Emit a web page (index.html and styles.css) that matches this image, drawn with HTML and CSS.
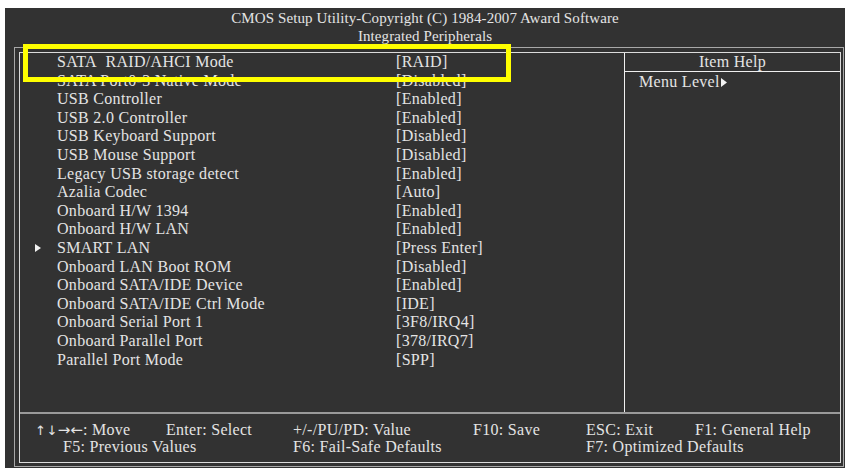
FILE: index.html
```html
<!DOCTYPE html>
<html>

<head>
    <link rel="stylesheet" href="styles.css">
</head>

<body>
    <div id="screen">
        <div id="title">
            <div>CMOS Setup Utility-Copyright (C) 1984-2007 Award Software</div>
            <div>Integrated Peripherals</div>
        </div>
        <div id="frame">
            <div id="inner">
                <div id="main">
                    <div id="items">
                        <div class="row"><span class="mark"></span><span class="label">SATA&nbsp; RAID/AHCI Mode</span><span class="value">[RAID]</span></div>
                        <div class="row"><span class="mark"></span><span class="label">SATA Port0-3 Native Mode</span><span class="value">[Disabled]</span></div>
                        <div class="row"><span class="mark"></span><span class="label">USB Controller</span><span class="value">[Enabled]</span></div>
                        <div class="row"><span class="mark"></span><span class="label">USB 2.0 Controller</span><span class="value">[Enabled]</span></div>
                        <div class="row"><span class="mark"></span><span class="label">USB Keyboard Support</span><span class="value">[Disabled]</span></div>
                        <div class="row"><span class="mark"></span><span class="label">USB Mouse Support</span><span class="value">[Disabled]</span></div>
                        <div class="row"><span class="mark"></span><span class="label">Legacy USB storage detect</span><span class="value">[Enabled]</span></div>
                        <div class="row"><span class="mark"></span><span class="label">Azalia Codec</span><span class="value">[Auto]</span></div>
                        <div class="row"><span class="mark"></span><span class="label">Onboard H/W 1394</span><span class="value">[Enabled]</span></div>
                        <div class="row"><span class="mark"></span><span class="label">Onboard H/W LAN</span><span class="value">[Enabled]</span></div>
                        <div class="row">
                            <span class="mark"><svg width="6" height="8" viewBox="0 0 6 8"><polygon points="0,0 6,4 0,8" fill="#f2f2f2" /></svg></span><span class="label">SMART LAN</span><span class="value">[Press Enter]</span>
                        </div>
                        <div class="row"><span class="mark"></span><span class="label">Onboard LAN Boot ROM</span><span class="value">[Disabled]</span></div>
                        <div class="row"><span class="mark"></span><span class="label">Onboard SATA/IDE Device</span><span class="value">[Enabled]</span></div>
                        <div class="row"><span class="mark"></span><span class="label">Onboard SATA/IDE Ctrl Mode</span><span class="value">[IDE]</span></div>
                        <div class="row"><span class="mark"></span><span class="label">Onboard Serial Port 1</span><span class="value">[3F8/IRQ4]</span></div>
                        <div class="row"><span class="mark"></span><span class="label">Onboard Parallel Port</span><span class="value">[378/IRQ7]</span></div>
                        <div class="row"><span class="mark"></span><span class="label">Parallel Port Mode</span><span class="value">[SPP]</span></div>
                    </div>
                    <div id="help">
                        <div id="helpHead">Item Help</div>
                        <div id="helpText">Menu Level<svg width="6" height="9" viewBox="0 0 6 9"><polygon points="0,0 6,4.5 0,9" fill="#f2f2f2" /></svg></div>
                    </div>
                </div>
                <div id="keys">
                    <span><span class="arrows">↑↓</span><span class="arrows wide">→←</span>: Move</span>
                    <span>Enter: Select</span>
                    <span>+/-/PU/PD: Value</span>
                    <span>F10: Save</span>
                    <span>ESC: Exit</span>
                    <span>F1: General Help</span>
                    <span class="f5">F5: Previous Values</span>
                    <span class="f6">F6: Fail-Safe Defaults</span>
                    <span class="f7">F7: Optimized Defaults</span>
                </div>
            </div>
        </div>
        <!-- highlight drawn over the first item -->
        <div id="highlight"></div>
    </div>
</body>

</html>
```

FILE: styles.css
```css
body {
    margin: 0;
    padding: 0;
    background-color: #fff;
    font-family: "Liberation Serif", "DejaVu Serif", serif;
    font-size: 16px;
    color: #e4e4e4;
    letter-spacing: 0.3px;
}

#screen {
    position: relative;
    margin: 8px 0 0 5px;
    width: 840px;
    height: 460px;
    background-color: #323232;
}

#title {
    height: 39px;
    text-align: center;
    font-size: 15px;
    letter-spacing: 0.1px;
    line-height: 18px;
    padding-top: 1px;
    box-sizing: border-box;
}

#frame {
    margin-left: 9px;
    width: 830px;
    height: 420px;
    border: 1px solid #a8a8a8;
    padding: 4px 2px 3px 4px;
    box-sizing: border-box;
}

#inner {
    height: 100%;
    border: 1px solid #dcdcdc;
    box-sizing: border-box;
    display: flex;
    flex-direction: column;
}

#main {
    flex: 1;
    display: flex;
    border-bottom: 2px solid #9a9a9a;
}

#items {
    width: 604px;
}

.row {
    display: flex;
    align-items: center;
    height: 18.6px;
    line-height: 18.6px;
    white-space: nowrap;
}

.mark {
    width: 37px;
    padding-left: 15px;
    box-sizing: border-box;
    display: flex;
    align-items: center;
}

.label {
    width: 339px;
}

#help {
    flex: 1;
    border-left: 1px solid #f0f0f0;
}

#helpHead {
    height: 18px;
    line-height: 18px;
    text-align: center;
    border-bottom: 1px solid #f0f0f0;
}

#helpText {
    padding-left: 14px;
    line-height: 19px;
}

#helpText svg {
    margin-left: 1px;
}

#keys {
    height: 48px;
    padding: 7px 0 0 15px;
    box-sizing: border-box;
    display: grid;
    grid-template-columns: 131px 127px 180px 113px 109px auto;
    grid-auto-rows: 17px;
    line-height: 17px;
    white-space: nowrap;
}

#keys .arrows {
    font-family: "DejaVu Sans", sans-serif;
    font-size: 13px;
    letter-spacing: 0.5px;
}

#keys .wide {
    font-size: 15px;
    letter-spacing: 0;
}

#keys .f5 {
    grid-column: 1 / 3;
    padding-left: 28px;
}

#keys .f6 {
    grid-column: 3 / 5;
}

#keys .f7 {
    grid-column: 5 / 7;
}

#highlight {
    position: absolute;
    left: 18px;
    top: 36px;
    width: 488px;
    height: 38px;
    border: 5px solid #ffff00;
    box-sizing: border-box;
}
```
